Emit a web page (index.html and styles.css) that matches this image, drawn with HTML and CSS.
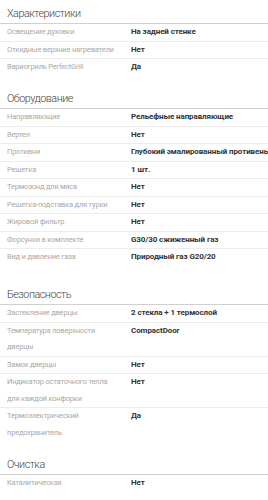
FILE: index.html
```html
<!DOCTYPE html>
<html lang="ru">
<head>
<meta charset="utf-8">
<link rel="stylesheet" href="styles.css">
</head>
<body>
<div class="specs">
  <section class="group">
    <h2 class="group-title">Характеристики</h2>
    <div class="row"><div class="label">Освещение духовки</div><div class="value">На задней стенке</div></div>
    <div class="row"><div class="label">Откидные верхние нагреватели</div><div class="value">Нет</div></div>
    <div class="row"><div class="label">Вариогриль PerfectGrill</div><div class="value">Да</div></div>
  </section>
  <section class="group">
    <h2 class="group-title">Оборудование</h2>
    <div class="row"><div class="label">Направляющие</div><div class="value">Рельефные направляющие</div></div>
    <div class="row"><div class="label">Вертел</div><div class="value">Нет</div></div>
    <div class="row"><div class="label">Противни</div><div class="value">Глубокий эмалированный противень</div></div>
    <div class="row"><div class="label">Решетка</div><div class="value">1 шт.</div></div>
    <div class="row"><div class="label">Термозонд для мяса</div><div class="value">Нет</div></div>
    <div class="row"><div class="label">Решетка-подставка для турки</div><div class="value">Нет</div></div>
    <div class="row"><div class="label">Жировой фильтр</div><div class="value">Нет</div></div>
    <div class="row"><div class="label">Форсунки в комплекте</div><div class="value">G30/30 сжиженный газ</div></div>
    <div class="row"><div class="label">Вид и давление газа</div><div class="value">Природный газ G20/20</div></div>
  </section>
  <section class="group group-spaced">
    <h2 class="group-title">Безопасность</h2>
    <div class="row"><div class="label">Застекление дверцы</div><div class="value">2 стекла + 1 термослой</div></div>
    <div class="row"><div class="label">Температура поверхности дверцы</div><div class="value">CompactDoor</div></div>
    <div class="row"><div class="label">Замок дверцы</div><div class="value">Нет</div></div>
    <div class="row"><div class="label">Индикатор остаточного тепла для каждой конфорки</div><div class="value">Нет</div></div>
    <div class="row"><div class="label">Термоэлектрический предохранитель</div><div class="value">Да</div></div>
  </section>
  <section class="group">
    <h2 class="group-title">Очистка</h2>
    <div class="row"><div class="label">Каталитическая</div><div class="value">Нет</div></div>
  </section>
</div>
</body>
</html>
```
FILE: styles.css
```css
html, body {
  margin: 0;
  padding: 0;
  background: #fff;
  overflow: hidden;
}
body {
  font-family: Roboto, "Liberation Sans", Arial, sans-serif;
  width: 268px;
}
.specs {
  display: flex;
  flex-direction: column;
  gap: 9.5px;
}
.group-spaced {
  margin-top: 6px;
}
.group-title {
  margin: 0;
  padding: 5px 0 0 7px;
  line-height: 18px;
  font-size: 10.8px;
  letter-spacing: -0.5px;
  font-weight: 300;
  color: #444;
  border-bottom: 1px solid #cfcfcf;
}
.row {
  display: grid;
  grid-template-columns: 131px 1fr;
  font-size: 7.5px;
  line-height: 16.5px;
  border-bottom: 1px solid #ececec;
}
.row:last-child {
  border-bottom: none;
}
.label {
  padding: 0 11px 0 7px;
  color: #a9a9a9;
  letter-spacing: -0.2px;
}
.value {
  color: #333;
  font-weight: bold;
  font-size: 8px;
  letter-spacing: -0.1px;
  white-space: nowrap;
}
```
